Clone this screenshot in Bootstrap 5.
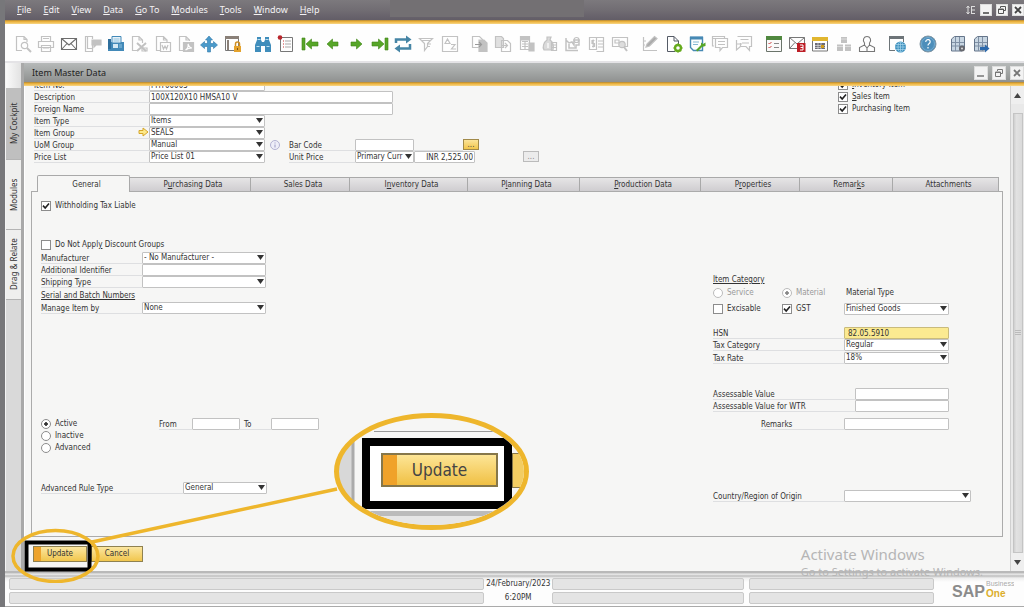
<!DOCTYPE html>
<html lang="en">
<head>
<meta charset="utf-8">
<meta name="viewport" content="width=device-width, initial-scale=1">
<title>Item Master Data</title>
<link rel="stylesheet" href="https://cdn.jsdelivr.net/npm/bootstrap@5.3.0/dist/css/bootstrap.min.css">
<script src="https://cdn.jsdelivr.net/npm/bootstrap@5.3.0/dist/js/bootstrap.bundle.min.js"></script>
<style>
:root{--ui:"Noto Sans","Open Sans",sans-serif;--form:"DejaVu Sans Condensed","DejaVu Sans",sans-serif;--gold:#eeb62c}
body{font:8px/12px var(--form);color:#333;background:#f6f6f5;border-left:5px solid #77777a;overflow:hidden}
a{color:inherit;text-decoration:none}
.menubar{height:20px;background:linear-gradient(#7c797d,#716d73 50%,#625d67);font:9px/19px var(--ui);color:#f4f2f4;padding-left:12px;gap:12px}
.menublank{width:194px;height:17px;background:#737073;margin-left:59px}
.goldline{height:4px;background:linear-gradient(#b08535,#ecb23c 40%,#f8d684);flex:none}
.winbtn{width:12px;height:12px;padding:0;border:1px solid #ddd;background:#f3f3f3;display:flex;align-items:center;justify-content:center}
.winbtn svg{width:10px;height:10px}
.toolbar{height:37px;background:#fefefe;padding:2px 31px 0 6px}
.tool{flex:1 1 0;min-width:0;border:0;background:none;padding:0;text-align:center;line-height:0}
.tool svg{width:18px;height:18px;overflow:visible}
.gapcell{width:7px;flex:none}
.band{height:2px;background:#e4e3e6;flex:none}
:where(svg:not([fill])){fill:none}
.g{stroke:#c2c2c2;stroke-width:1.2}.gf{fill:#c2c2c2}
.sidetabs{width:19px;flex:none;background:#d9d9d9;border-right:3px solid #a9a9a9;border-left:1px solid #f4f4f4}
.sidetabs a{writing-mode:vertical-rl;transform:rotate(180deg);height:70px;width:15px;font:8px/15px var(--ui);text-align:center;background:#efefee;border-top:1px solid #b4b4b4;display:block}
.sidetabs .stub{height:25px;background:linear-gradient(90deg,#fafafa,#e2e2e2)}
.sidetabs a.on{background:#bfbfbf;height:72px}
.titlebar{height:19px;background:linear-gradient(#b6b9b9,#a2a5a4 50%,#8f9190);font:9px/19px var(--ui);color:#222;padding-left:8px;flex:none}
.titlebar .winbtn{width:14px;height:14px}
.form-area{background:#f6f6f5;border-left:1px solid #fff;position:relative;padding:0 0 0 6px}
.clip{overflow:hidden;flex:none;padding-left:3px}
.ln{display:flex;height:12px;align-items:stretch;white-space:nowrap}
.lb{border-bottom:1px solid #dedfe1;line-height:13px;flex:none}
.w114{width:115px}.w101{width:101px}.w131{width:131px}.w142{width:142px}
.fld{height:12px;border:1px solid #c2c2c2;border-radius:1px;background:#fff;font:8px/10px var(--form);color:#333;padding:0 1px;flex:none;min-width:0;outline:0;margin:0}
select.fld{appearance:none;background:#fff url("data:image/svg+xml,%3Csvg xmlns='http://www.w3.org/2000/svg' viewBox='0 0 7 5'%3E%3Cpath d='M0 0h7L3.5 5z' fill='%23333'/%3E%3C/svg%3E") no-repeat right 1px top 2px/7px 5px}
.f116{width:116px}.f124{width:124px}.f244{width:244px}.f48{width:48px}.f59{width:59px}.f61{width:61px}.f105{width:105px}.f94{width:94px}.f84{width:84px}.f127{width:127px}
.hl{background:#fbea91;border-color:#c9bb7c;padding-left:3px}
.dots{width:16px;height:11px;border:1px solid #a18a4a;background:linear-gradient(#fbe49a,#f2c64b);font:8px/6px var(--form);padding:0;color:#444}
.dots:disabled{border-color:#bbb;background:#ececec;color:#888}
.tick{appearance:none;width:10px;height:10px;border:1px solid #8c8c8c;background:#fff;margin:1px 4px 0 0;flex:none}
.tick:checked{background:#fff url("data:image/svg+xml,%3Csvg xmlns='http://www.w3.org/2000/svg' viewBox='0 0 8 8'%3E%3Cpath d='M1 3.6L3.2 6 7 1.4' stroke='%23222' stroke-width='1.6' fill='none'/%3E%3C/svg%3E") center/8px 8px no-repeat}
.dot{appearance:none;width:10px;height:10px;border:1px solid #8c8c8c;border-radius:50%;background:#fff;margin:1px 4px 0 0;flex:none}
.dot:checked{background:radial-gradient(circle,#333 1.5px,#fff 2px)}
.off{color:#999}.off .dot{border-color:#bbb}.off .dot:checked{background:radial-gradient(circle,#888 1.5px,#fff 2px)}
.tabstrip{display:grid;grid-template-columns:93fr 121fr 99fr 118fr 112fr 121fr 99fr 93fr 106fr;margin:13px 11px 0 6px;height:15px;flex:none}
.tabstrip button{border:1px solid #a9a9a9;border-bottom:0;border-left:0;background:linear-gradient(#e6e5e6,#cfcdd0);padding:0 0 0 6px;font:8px/13px var(--form);color:#333;margin-top:1px}
.tabstrip button.on{background:#f6f6f5;border-left:1px solid #a9a9a9;margin:-1px 0 -1px;border-radius:2px 2px 0 0;z-index:1}
.pane{border:1px solid #ababab;margin-right:7px;padding:8px 31px 0 9px}
.s1{margin-top:1px}.s2{margin-top:2px}.s4{margin-top:4px}.s6{margin-top:6px}.s12{margin-top:12px}.s24{margin-top:24px}.s27{margin-top:27px}.s28{margin-top:28px}.s60{margin-top:60px}.s74{margin-top:74px}.s104{margin-top:104px}
.rightcol{width:258px;flex:none}
.cmd{height:16px;border:1px solid #8f8150;background:linear-gradient(#fbe6a0,#f1c64d);font:8px/12px var(--form);color:#333;padding:0}
.cmds{padding:9px 0 9px 2px;gap:4px}
.update{width:54px;background:linear-gradient(90deg,#eda32c 7px,transparent 7px),linear-gradient(#fbe6a0,#f1c64d)}
.cancel{width:52px}
.vscroll{width:14px;flex:none;background:#e9e9e9;border-left:1px solid #d0d0d0}
.vscroll button{border:0;background:#efefef;height:18px;width:100%;padding:0;line-height:0}
.thumb{background:linear-gradient(90deg,#cfcfcf,#e2e2e2 30%,#dadada);border:1px solid #c4c4c4;margin:9px 1px 0 2px;display:flex;align-items:center;justify-content:center}
.marks{position:absolute;left:-14px;bottom:-12px;width:400px;height:110px;pointer-events:none}
.callout{position:absolute;left:309px;bottom:41px;width:195px;height:117px;border:5px solid var(--gold);border-radius:50%;background:linear-gradient(90deg,#d8d8d8 12px,#aaa 13px 15px,#f6f6f5 16px);overflow:hidden}
.callout::before{content:"";position:absolute;left:35px;right:0;top:13px;border-top:1px solid #999}
.callout::after{content:"";position:absolute;left:17px;right:0;bottom:0;height:14px;border-top:5px solid #bbb;background:#e6e6e6}
.calloutbox{position:absolute;left:23px;top:20px;width:150px;height:71px;border:8px solid #000;background:#fff;z-index:1}
.bigupdate{position:absolute;left:11px;top:7px;width:117px;height:34px;border:2px solid #86774a;background:linear-gradient(90deg,#f0a229 14px,transparent 14px),linear-gradient(#fde596,#f0c044);font:17px/28px "DejaVu Sans Condensed",sans-serif;color:#444;padding:0}
.cancelpeek{position:absolute;left:173px;top:35px;width:20px;height:35px;border:1px solid #86774a;background:#f3cd62}
.statusbar{background:linear-gradient(#b9b9b9 2px,#f0f0f0 3px,#bdbdbd 5px,#eee 7px,#fdfdfd 11px);padding:7px 10px 2px 4px;flex:none;height:36px;border-bottom:1px solid #aaa}
.statusgrid{display:grid;grid-template-columns:473fr 66px 191fr 188fr;column-gap:1px;row-gap:2px;flex:1}
.slot{height:12px;background:#e4e4e4;border:1px solid #c9c9c9;border-radius:2px}
.saplogo{width:62px;margin-left:18px}
.watermark{position:absolute;right:41px;bottom:28px;font-family:var(--ui);color:#b5b5b5;z-index:5;pointer-events:none}
.watermark div{font-size:15px;line-height:22px}.watermark p{font-size:11px;line-height:14px;margin:0}
</style>
</head>
<body class="d-flex flex-column vh-100 position-relative">
<nav class="menubar d-flex flex-none">
<a href="#"><u>F</u>ile</a><a href="#"><u>E</u>dit</a><a href="#"><u>V</u>iew</a><a href="#"><u>D</u>ata</a><a href="#"><u>G</u>o To</a><a href="#"><u>M</u>odules</a><a href="#"><u>T</u>ools</a><a href="#"><u>W</u>indow</a><a href="#"><u>H</u>elp</a>
<span class="menublank"></span>
<span class="ms-auto d-flex align-items-center gap-1">
<svg width="10" height="10" viewBox="0 0 10 10" stroke="#ddd"><path d="M2 1v8M.5 3L2 1l1.500 2M.5 7L2 9l1.500-2M5 1.500h4M5 5h4M5 8.500h4M5.500 1v8"/></svg>
<button class="winbtn" aria-label="Minimize"><svg viewBox="0 0 10 10"><path d="M2 8h6" stroke="#444" stroke-width="1.500"/></svg></button>
<button class="winbtn" aria-label="Restore"><svg viewBox="0 0 10 10" stroke="#555"><path d="M3.500 3V1.500h5v4H7M1.500 4h5v4.500h-5zM1.500 4.500h5"/></svg></button>
<button class="winbtn" aria-label="Close"><svg viewBox="0 0 10 10"><path d="M2 2l6 6M8 2l-6 6" stroke="#444" stroke-width="1.800"/></svg></button>
</span>
</nav>
<div class="goldline"></div>
<div class="toolbar d-flex align-items-center" role="toolbar">
<button class="tool" aria-label="Preview"><svg viewBox="0 0 18 18" class="g"><path d="M13 7V4.500L10 1.500H2.500v14H8M10 1.500v3h3"/><circle cx="10.500" cy="10.500" r="3.200"/><path d="M13 13l4 4" stroke-width="2"/></svg></button>
<button class="tool" aria-label="Print"><svg viewBox="0 0 18 18" class="g"><path d="M4.500 6V1.500h9V6M1.500 6.500h15v6h-15zM4.500 10.500h9v6h-9zM6 13h6M6 3.500h6"/></svg></button>
<button class="tool" aria-label="Mail"><svg viewBox="0 0 18 18" stroke="#6d6d6d" stroke-width="1.100"><path d="M1.500 3.500h15v11h-15zM1.500 3.500L9 10l7.500-6.500M1.500 14.500L7 8.500M16.500 14.500L11 8.500"/></svg></button>
<button class="tool" aria-label="Message"><svg viewBox="0 0 18 18" class="g"><path d="M8.500 10v6.500h-7v-15h7V4M3.500 1.500v12h5"/><path d="M8 5h9v5h-5l-2 2v-2H8z" class="gf"/></svg></button>
<button class="tool" aria-label="Fax"><svg viewBox="0 0 18 18"><path d="M1 7h16v9H1z" fill="#4289b8"/><path d="M5 1.500h9V8H5z" fill="#e8f2f8" stroke="#4289b8"/><path d="M1 4h3v10H1z" fill="#2e6e9c"/><path d="M6 9h5v4H6z" fill="#d5e9f4"/><path d="M12 10h3M12 12h3M6.500 4h6M6.500 6h6" stroke="#8fc3e0"/></svg></button>
<button class="tool" aria-label="Export to Excel"><svg viewBox="0 0 18 18" class="g"><path d="M12.500 8V5l-3.500-3.500H2.500v14H8M9 1.500V5h3.500"/><path d="M7 8l9 8M16 8l-9 8" stroke-width="2"/><path d="M12 13h5v3h-5z"/></svg></button>
<button class="tool" aria-label="Export to Word"><svg viewBox="0 0 18 18" class="g"><path d="M13 7V5L9.500 1.500H2.500v14H6M9.500 1.500V5H13M6.500 7.500h10v9h-10z"/><path d="M8 10l1.500 4L11 11l1.500 3 1.500-4" /></svg></button>
<button class="tool" aria-label="Export to PDF"><svg viewBox="0 0 18 18" class="g"><path d="M12.500 6V5L9 1.500H2.500v14H6M9 1.500V5h3.500"/><path d="M6.500 7.500h10v9h-10z" class="gf"/><path d="M8.500 15c3-2 3-4 2.500-6 1 3 2 4 4 4-3 0-5 1-6.500 2" stroke="#fff"/></svg></button>
<button class="tool" aria-label="Layout"><svg viewBox="0 0 18 18" fill="#4a9aca" stroke="#2f79ab" stroke-width=".6"><path d="M9 1l3.500 4h-2v3.500h3V6.500L17.500 10l-4 3.500v-2h-3V17h-3v-5.500h-3v2L.5 10l4-3.500v2h3V5h-2z"/></svg></button>
<button class="tool" aria-label="Lock screen"><svg viewBox="0 0 18 18"><path d="M1.500 1.500h13v14h-13z" stroke="#777"/><path d="M1 1h14v3H1zM3 5h2v10H3z" fill="#8a8078"/><path d="M10 11h7v6h-7z" fill="#e4a22c"/><path d="M11.500 11V9a2 2 0 014 0v2" stroke="#d08f21" stroke-width="1.500"/><path d="M13.500 13v2" stroke="#805414"/></svg></button>
<span class="gapcell"></span>
<button class="tool" aria-label="Find"><svg viewBox="0 0 18 18" fill="#3f8dbb"><path d="M3 2h4v3l1 2h2l1-2V2h4v3l2 5v7h-6v-6H7v6H1v-7l2-5z"/><path d="M2.500 11.500h3M12.500 11.500h3M3.500 4.500h3M11.500 4.500h3" stroke="#bfe0f0"/></svg></button>
<button class="tool" aria-label="Add"><svg viewBox="0 0 18 18"><path d="M3.500 2.500h12v14h-12z" stroke="#777"/><path d="M6 6h1M6 9h1M6 12h1" stroke="#c33"/><path d="M8 6h6M8 9h6M8 12h6" stroke="#aaa"/><circle cx="3" cy="2.500" r="2.300" fill="#b9262c"/></svg></button>
<button class="tool" aria-label="First"><svg viewBox="0 0 18 18" fill="#57a629" stroke="#3f8518" stroke-width=".6"><path d="M1 3h3v12H1zM5 9l5.500-5v3H17v4h-6.500v3z"/></svg></button>
<button class="tool" aria-label="Previous"><svg viewBox="0 0 18 18" fill="#57a629" stroke="#3f8518" stroke-width=".6"><path d="M3 9l5.500-5v3H14v4H8.500v3z"/></svg></button>
<button class="tool" aria-label="Next"><svg viewBox="0 0 18 18" fill="#57a629" stroke="#3f8518" stroke-width=".6"><path d="M15 9L9.500 4v3H4v4h5.500v3z"/></svg></button>
<button class="tool" aria-label="Last"><svg viewBox="0 0 18 18" fill="#57a629" stroke="#3f8518" stroke-width=".6"><path d="M14 3h3v12h-3zM13 9L7.500 4v3H1v4h6.500v3z"/></svg></button>
<button class="tool" aria-label="Refresh"><svg viewBox="0 0 18 18"><path d="M2 8V4.500h11M16 9v4.500H5" stroke="#4685a5" stroke-width="2.500"/><path d="M12 .5l5.500 4-5.500 4zM6 9.500l-5.500 4 5.500 4z" fill="#4685a5"/></svg></button>
<button class="tool" aria-label="Filter"><svg viewBox="0 0 18 18" class="g"><path d="M2.500 3.500h13l-5 5v3l-3 4v-7zM4 5.500h9M10 9h4M10 11.500h3"/></svg></button>
<button class="tool" aria-label="Sort"><svg viewBox="0 0 18 18" class="g"><path d="M1.500 1.500h15v15h-15zM4 8.500L6.500 4 9 8.500zM10 9.500h4L10.500 14H15"/></svg></button>
<span class="gapcell"></span>
<button class="tool" aria-label="Base document"><svg viewBox="0 0 18 18" class="g"><path d="M1.500 1.500h7l3 3v8h-10z"/><path d="M8 5h5l3 3v8.500H8z" class="gf"/><path d="M4 9.500h6M8 7l2.500 2.500L8 12" stroke="#999"/></svg></button>
<button class="tool" aria-label="Target document"><svg viewBox="0 0 18 18" class="g"><path d="M1.500 1.500h6l2 2v9h-8z" class="gf" fill-opacity=".5"/><path d="M7.500 5.500h6l3 3v8h-9zM7 10.500h6M11 8l2.500 2.500L11 13"/></svg></button>
<button class="tool" aria-label="Gross profit"><svg viewBox="0 0 18 18" class="g"><path d="M2.500 1.500h9v13h-9zM4 6.500h6M4 9h6M4 11.500h6M7 6v8"/><path d="M3 2h8v3H3zM11 8h5v8h-5z" class="gf"/></svg></button>
<button class="tool" aria-label="Payment"><svg viewBox="0 0 18 18" class="g"><path d="M6 2h4L9 5c3 2 4 5 3 10H3c-2-3 0-8 3-10z" class="gf" fill-opacity=".6"/><path d="M10.500 7.500h5v8h-5zM10.500 10h5M10.500 12.500h5"/><path d="M7 8v5" stroke="#fff"/></svg></button>
<button class="tool" aria-label="Volume"><svg viewBox="0 0 18 18" class="g"><path d="M2 3v12.500h12M2 5l3 3 3-1 2 3V5h5v5h-3v3H5V9" stroke-width="1.500"/><circle cx="12.500" cy="5" r="2.500"/></svg></button>
<button class="tool" aria-label="Journal"><svg viewBox="0 0 18 18" class="g"><path d="M1.500 2.500h7v12h-7zM8.500 2.500h7v14h-7M10 6h5M10 9h5M10 12h5M6.500 5.500H4v3h2.500v3H4M5.200 4.500v8"/></svg></button>
<button class="tool" aria-label="Query"><svg viewBox="0 0 18 18" class="g"><path d="M1.500 2.500h15v9h-15zM4 5h4v3H4z"/><circle cx="11" cy="9.500" r="3.200" fill="#ddd"/><path d="M13 12l3 4" stroke-width="2"/></svg></button>
<span class="gapcell"></span>
<button class="tool" aria-label="Edit layout"><svg viewBox="0 0 18 18" class="g"><path d="M2.500 2v13.500H16M2 6h3M2 10h2"/><path d="M5 12l1-3 7.500-7.500 2.500 2L8.500 11z" fill="#aaa"/></svg></button>
<button class="tool" aria-label="Form settings"><svg viewBox="0 0 18 18"><path d="M10 16.500H2.500v-15H9l4.500 4.500V9M9 1.500V6h4.500" stroke="#555b66"/><circle cx="13" cy="13" r="3" stroke="#65aa1d" stroke-width="2.400"/><path d="M13 8.500v2M13 15.500v2M8.500 13h2M15.500 13h2M10 10l1 1M15 15l1.200 1.200M16 10l-1 1M11 15l-1.200 1.200" stroke="#65aa1d" stroke-width="1.500"/></svg></button>
<button class="tool" aria-label="Edit form"><svg viewBox="0 0 18 18"><path d="M2.500 2.500h12v13h-9l-3-3z" stroke="#4689b4" stroke-width="1.400"/><path d="M2 1.500h13v3H2z" fill="#4689b4"/><path d="M5 7h6M5 9.500h5" stroke="#84b7d4"/><path d="M8 15l5-5V7.500l2 1.500 2.500-1.500V11l-3.500 1-4.500 4.500z" fill="#57a629"/></svg></button>
<button class="tool" aria-label="Messages"><svg viewBox="0 0 18 18" class="g"><path d="M4 3.500h-2.500V11H3M4.500 3.500h12v9h-5l-2.500 3v-3H4.500zM7 6.500h7M7 9.500h7M1.500 3.500v-2h12v2"/></svg></button>
<button class="tool" aria-label="Alerts"><svg viewBox="0 0 18 18" class="g"><path d="M2.500 1.500h14v10h-2v4l-3.500-4H6M1.500 5v10l4-3.500V8M5.500 4.500h8M7 8h7M1 9h6"/></svg></button>
<span class="gapcell"></span>
<button class="tool" aria-label="Tasks"><svg viewBox="0 0 18 18"><path d="M1.500 1.500h15v15h-15z" stroke="#6b746b" fill="#fafafa"/><path d="M1 1h16v4H1z" fill="#50883f"/><path d="M3.500 8l1 1 2-2M3.500 12l1 1 2-2" stroke="#c44"/><path d="M9 8.500h5M9 12.500h5" stroke="#888"/></svg></button>
<button class="tool" aria-label="Mail alerts"><svg viewBox="0 0 18 18"><path d="M1.500 2.500h15v11h-15zM1.500 2.500L9 9l7.500-6.500M1.500 13.500L7 7.500" stroke="#777"/><path d="M9 8h8.500v9H9z" fill="#bd1e26"/><path d="M12 10h3v5h-3M12.500 12.500H15" stroke="#fff"/></svg></button>
<button class="tool" aria-label="Calendar"><svg viewBox="0 0 18 18"><path d="M1.500 2.500h15v13.500h-15z" stroke="#777"/><path d="M1 2h16v4H1z" fill="#e1b62f"/><path d="M4 8h10v6H4z" fill="#6b6b75"/><path d="M4 10.500h10M4 12.500h10M7 8v6M10 8v6" stroke="#ddd" stroke-width=".7"/><path d="M10 10h3v3h-3z" fill="#cf9b1c"/></svg></button>
<button class="tool" aria-label="Organization"><svg viewBox="0 0 18 18" class="gf"><path d="M6 2h6v6H6zM2 9.500h6V16H2zM10 9.500h6V16h-6z"/><path d="M6 4h6M2 11.500h6M10 11.500h6" stroke="#ddd"/></svg></button>
<button class="tool" aria-label="Employee"><svg viewBox="0 0 18 18" stroke="#777" stroke-width="1.100"><path d="M1.500 16.500v-4l5-2.500V8C4 5 6 1.500 9 1.500S14 5 11.500 8v2l5 2.500v4zM6.500 10L9 13l2.500-3M9 13v3"/></svg></button>
<span class="gapcell"></span>
<button class="tool" aria-label="Browser"><svg viewBox="0 0 18 18"><path d="M7 15.500H1.500v-14h14V7" stroke="#6d7478"/><path d="M1 1h15v3H1z" fill="#6d7478"/><circle cx="12.500" cy="12" r="5.500" fill="#3a8ebc"/><path d="M7 12h11M12.500 6.500v11M8 9.500h9M8 14.500h9" stroke="#a9d6ec" stroke-width=".7"/><ellipse cx="12.500" cy="12" rx="2.500" ry="5.500" stroke="#a9d6ec" stroke-width=".7"/></svg></button>
<span class="gapcell"></span>
<button class="tool" aria-label="Help"><svg viewBox="0 0 18 18"><circle cx="9" cy="9" r="8" fill="#4d8eba" stroke="#8296a4"/><circle cx="9" cy="9" r="6.500" stroke="#7db2d4" stroke-width=".8"/><path d="M6.800 7a2.200 2.200 0 114 1c-1 1-1.800 1.200-1.800 2.500M9 12v1.500" stroke="#fff" stroke-width="1.200"/></svg></button>
<span class="gapcell"></span>
<button class="tool" aria-label="Data settings"><svg viewBox="0 0 18 18"><path d="M2.500 4l3-2.500h10v12l-3 2.500h-10z" fill="#c8d6e2" stroke="#65758a"/><path d="M3 7.500h12M3 11h12M6.500 2v14M10.500 2v14" stroke="#7f90a5"/><circle cx="13" cy="13.500" r="3" fill="#66686f"/><circle cx="13" cy="13.500" r="1" fill="#ddd"/></svg></button>
<button class="tool" aria-label="Data export"><svg viewBox="0 0 18 18"><path d="M2.500 4l3-2.500h10v12l-3 2.500h-10z" fill="#c8d6e2" stroke="#65758a"/><path d="M3 7.500h12M3 11h12M6.500 2v14M10.500 2v14" stroke="#7f90a5"/><path d="M8 12h5v-2.500l4.500 4-4.500 4V15H8z" fill="#2c69ac"/></svg></button>
</div>
<div class="band"></div>
<div class="d-flex flex-grow-1" style="min-height:0">
<nav class="sidetabs"><div class="stub"></div><a href="#" class="on">My Cockpit</a><a href="#">Modules</a><a href="#">Drag &amp; Relate</a></nav>
<div class="d-flex flex-column flex-grow-1" style="min-width:0">
<div class="titlebar d-flex align-items-center">Item Master Data
<span class="ms-auto d-flex gap-1">
<button class="winbtn" aria-label="Minimize window"><svg viewBox="0 0 10 10"><path d="M1 8h7" stroke="#777" stroke-width="1.500"/></svg></button>
<button class="winbtn" aria-label="Restore window"><svg viewBox="0 0 10 10" stroke="#777"><path d="M3.500 3V1.500h5v4H7M1.500 4h5v4.500h-5zM1.500 4.500h5"/></svg></button>
<button class="winbtn" aria-label="Close window"><svg viewBox="0 0 10 10"><path d="M2 2l6 6M8 2l-6 6" stroke="#777" stroke-width="1.800"/></svg></button>
</span></div>
<div class="goldline"></div>
<div class="d-flex flex-grow-1" style="min-height:0">
<form class="form-area flex-grow-1 d-flex flex-column" onsubmit="return false">
<div class="clip d-flex">
<div style="margin-top:-7px">
<div class="ln"><label class="lb w114" for="no">Item No.</label><input class="fld f116" id="no" value="FHY00005"></div>
<div class="ln"><label class="lb w114" for="desc">Description</label><input class="fld f244" id="desc" value="100X120X10 HMSA10 V"></div>
<div class="ln"><label class="lb w114" for="fn">Foreign Name</label><input class="fld f244" id="fn"></div>
<div class="ln"><label class="lb w114" for="type">Item Type</label><select class="fld f116" id="type"><option>Items</option></select></div>
<div class="ln"><label class="lb w114 d-flex justify-content-between" for="grp">Item Group<svg width="11" height="10" viewBox="0 0 11 10"><path d="M1 3.500h4V1l5 4-5 4V6.500H1z" fill="#fde98a" stroke="#d5a62a"/></svg></label><select class="fld f116" id="grp"><option>SEALS</option></select></div>
<div class="ln"><label class="lb w114" for="uom">UoM Group</label><select class="fld f116" id="uom"><option>Manual</option></select>
<svg class="ms-1" width="12" height="12" viewBox="0 0 12 12"><circle cx="6" cy="6" r="4.500" fill="#eeeef8" stroke="#b3b2d2"/><path d="M6 3.500v1M6 5.500v3" stroke="#9a99c4"/></svg>
<label class="lb ms-2" for="bar" style="width:66px">Bar Code</label><input class="fld f59" id="bar"><span class="lb" style="width:49px"></span><button class="dots" type="button" aria-label="Bar codes">...</button></div>
<div class="ln"><label class="lb w114" for="pl">Price List</label><select class="fld f116" id="pl"><option>Price List 01</option></select>
<label class="lb" for="cur" style="width:66px;margin-left:24px">Unit Price</label><select class="fld f59" id="cur"><option>Primary Curr</option></select><input class="fld f61 ms-0 text-end" aria-label="Unit price amount" value="INR 2,525.00"><button class="dots" type="button" disabled style="margin-left:48px" aria-label="Price details">...</button></div>
</div>
<div class="ms-auto" style="width:172px;margin-top:-7px">
<div class="ln"><input class="tick" type="checkbox" id="inv" checked><label for="inv"><u>I</u>nventory Item</label></div>
<div class="ln"><input class="tick" type="checkbox" id="sal" checked><label for="sal"><u>S</u>ales Item</label></div>
<div class="ln"><input class="tick" type="checkbox" id="pur" checked><label for="pur">Purchasing Item</label></div>
</div>
</div>
<div class="tabstrip" role="tablist">
<button class="on" type="button">General</button><button type="button">P<u>u</u>rchasing Data</button><button type="button">Sales Data</button><button type="button">I<u>n</u>ventory Data</button><button type="button">P<u>l</u>anning Data</button><button type="button"><u>P</u>roduction Data</button><button type="button">P<u>r</u>operties</button><button type="button">Remar<u>k</u>s</button><button type="button">Attachments</button>
</div>
<div class="pane d-flex flex-grow-1">
<div>
<div class="ln"><input class="tick" type="checkbox" id="wt" checked><label for="wt">Withholding Tax Liable</label></div>
<div class="ln s27"><input class="tick" type="checkbox" id="dg"><label for="dg">Do Not Appl<u>y</u> Discount Groups</label></div>
<div class="ln s1"><label class="lb w101" for="man">Manufacturer</label><select class="fld f124" id="man"><option>- No Manufacturer -</option></select></div>
<div class="ln"><label class="lb w101" for="ai">Additional Identifier</label><input class="fld f124" id="ai"></div>
<div class="ln"><label class="lb w101" for="st">Shipping Type</label><select class="fld f124" id="st"><option></option></select></div>
<div class="ln s2"><u>Serial and Batch Numbers</u></div>
<div class="ln"><label class="lb w101" for="mi">Manage Item by</label><select class="fld f124" id="mi"><option>None</option></select></div>
<div class="ln s104"><input class="dot" type="radio" name="act" id="a1" checked><label for="a1" style="width:104px">Active</label><label class="lb" for="from" style="width:33px">From</label><input class="fld f48" id="from"><label class="lb ps-1" for="to" style="width:31px">To</label><input class="fld f48" id="to"></div>
<div class="ln"><input class="dot" type="radio" name="act" id="a2"><label for="a2">Inactive</label></div>
<div class="ln"><input class="dot" type="radio" name="act" id="a3"><label for="a3">Advanced</label></div>
<div class="ln s28"><label class="lb w142" for="ar">Advanced Rule Type</label><select class="fld f84" id="ar"><option>General</option></select></div>
</div>
<div class="rightcol ms-auto">
<div class="ln s74"><u>Item Category</u></div>
<div class="ln s1"><span class="d-flex off" style="width:69px"><input class="dot" type="radio" name="cat" id="c1" disabled><label for="c1">Service</label></span><span class="d-flex off" style="width:64px"><input class="dot" type="radio" name="cat" id="c2" checked disabled><label for="c2">Material</label></span><label for="mt">Material Type</label></div>
<div class="ln s4"><span class="d-flex" style="width:69px"><input class="tick" type="checkbox" id="ex"><label for="ex">Excisable</label></span><span class="d-flex" style="width:62px"><input class="tick" type="checkbox" id="gst" checked><label for="gst">GST</label></span><select class="fld f105" id="mt"><option>Finished Goods</option></select></div>
<div class="ln s12"><label class="lb w131" for="hsn">HSN</label><input class="fld hl f105" id="hsn" value="82.05.5910" autofocus></div>
<div class="ln"><label class="lb w131" for="tc">Tax Category</label><select class="fld f105" id="tc"><option>Regular</option></select></div>
<div class="ln s1"><label class="lb w131" for="tr">Tax Rate</label><select class="fld f105" id="tr"><option>18%</option></select></div>
<div class="ln s24"><label class="lb w142" for="av">Assessable Value</label><input class="fld f94" id="av"></div>
<div class="ln"><label class="lb w142" for="aw">Assessable Value for WTR</label><input class="fld f94" id="aw"></div>
<div class="ln s6"><label class="lb" for="rm" style="width:83px;margin-left:48px">Remarks</label><input class="fld f105" id="rm"></div>
<div class="ln s60"><label class="lb w131" for="co">Country/Region of Origin</label><select class="fld f127" id="co"><option></option></select></div>
</div>
</div>
<div class="cmds d-flex"><button class="cmd update" type="button">Update</button><button class="cmd cancel" type="button">Cancel</button></div>
<svg class="marks" viewBox="0 0 400 110" aria-hidden="true"><rect x="15.500" y="69.500" width="63" height="27" stroke="#000" stroke-width="4"/><g stroke="#eeb62c" stroke-width="3.500"><ellipse cx="44.500" cy="83" rx="42.500" ry="25.500"/><path d="M81 69L326 16"/></g></svg>
<div class="callout"><div class="cancelpeek"></div><div class="calloutbox"><button class="bigupdate" type="button">Update</button></div></div>
</form>
<div class="vscroll d-flex flex-column"><button type="button" aria-label="Scroll up"><svg width="7" height="5" viewBox="0 0 7 5"><path d="M0 5h7L3.500 0z" fill="#444"/></svg></button><div class="thumb flex-grow-1"><svg width="6" height="6" viewBox="0 0 6 6"><path d="M0 .5h6M0 2.500h6M0 4.500h6" stroke="#bbb"/></svg></div><button type="button" aria-label="Scroll down"><svg width="7" height="5" viewBox="0 0 7 5"><path d="M0 0h7L3.500 5z" fill="#444"/></svg></button></div>
</div>
</div>
</div>
<footer class="statusbar d-flex">
<div class="statusgrid"><span class="slot"></span><span class="text-center text-nowrap">24/February/2023</span><span class="slot"></span><span class="slot ms-1"></span><span class="slot"></span><span class="text-center">6:20PM</span><span class="slot"></span><span class="slot ms-1"></span></div>
<svg class="saplogo" viewBox="0 0 62 26" height="26"><text x="0" y="19" font-family="Liberation Sans, sans-serif" font-weight="bold" font-size="16" fill="#8b8b8b">SAP</text><text x="34" y="8" font-family="Liberation Sans, sans-serif" font-size="7" fill="#aaa">Business</text><text x="34" y="19" font-family="Liberation Sans, sans-serif" font-weight="bold" font-size="10" fill="#dcae2b">One</text></svg>
</footer>
<div class="watermark"><div>Activate Windows</div><p>Go to Settings to activate Windows.</p></div>
</body>
</html>
